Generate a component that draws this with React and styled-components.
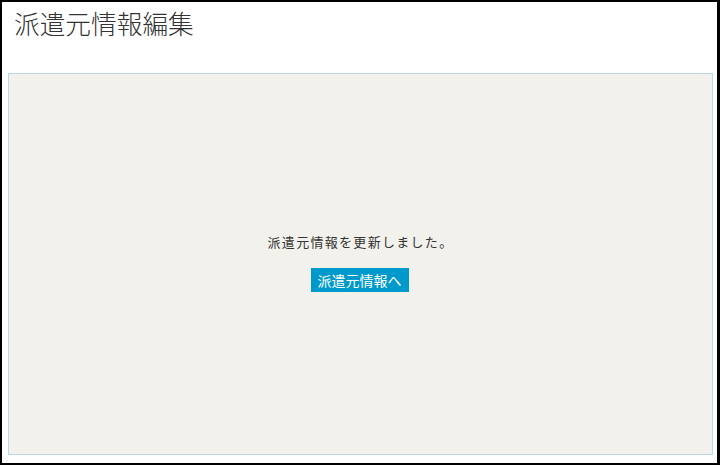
import React from 'react'
import styled, { createGlobalStyle } from 'styled-components'

const GlobalStyle = createGlobalStyle`
    html, body {
        margin: 0;
        padding: 0;
        background: #ffffff;
    }
    body {
        font-family: "Noto Sans CJK JP", "Noto Sans", sans-serif;
        color: #333333;
    }
`

function App() {
    return (
        <Frame>
            <GlobalStyle />
            <Header>
                <Title>派遣元情報編集</Title>
            </Header>
            <Panel>
                <Message>派遣元情報を更新しました。</Message>
                <BackButton type="button">派遣元情報へ</BackButton>
            </Panel>
        </Frame>
    )
}

export default App

const Frame = styled.div`
    width: 720px;
    height: 465px;
    box-sizing: border-box;
    border: 2px solid #000000;
    border-right-width: 3px;
    display: flex;
    flex-direction: column;
    padding: 0 4px 8px 6px;
    background: #ffffff;
`

const Header = styled.div`
    height: 71px;
    display: flex;
    align-items: flex-start;
    padding-left: 6px;
`

const Title = styled.h1`
    margin: 0;
    padding-top: 3px;
    font-size: 25.7px;
    font-weight: 300;
    line-height: 36px;
    color: #333333;
`

const Panel = styled.div`
    flex: 1;
    background: #f2f1ec;
    border: 1px solid #b9d7f0;
    display: flex;
    flex-direction: column;
    align-items: center;
    justify-content: center;
    gap: 16px;
    padding-bottom: 4px;
`

const Message = styled.div`
    font-size: 13px;
    letter-spacing: 1.3px;
    line-height: 20px;
    color: #333333;
`

const BackButton = styled.button`
    border: none;
    background: #0099cc;
    color: #ffffff;
    font-family: "Noto Sans CJK JP", "Noto Sans", sans-serif;
    font-size: 14px;
    height: 24px;
    padding: 0 7px;
    margin-right: 2px;
    cursor: pointer;
`
